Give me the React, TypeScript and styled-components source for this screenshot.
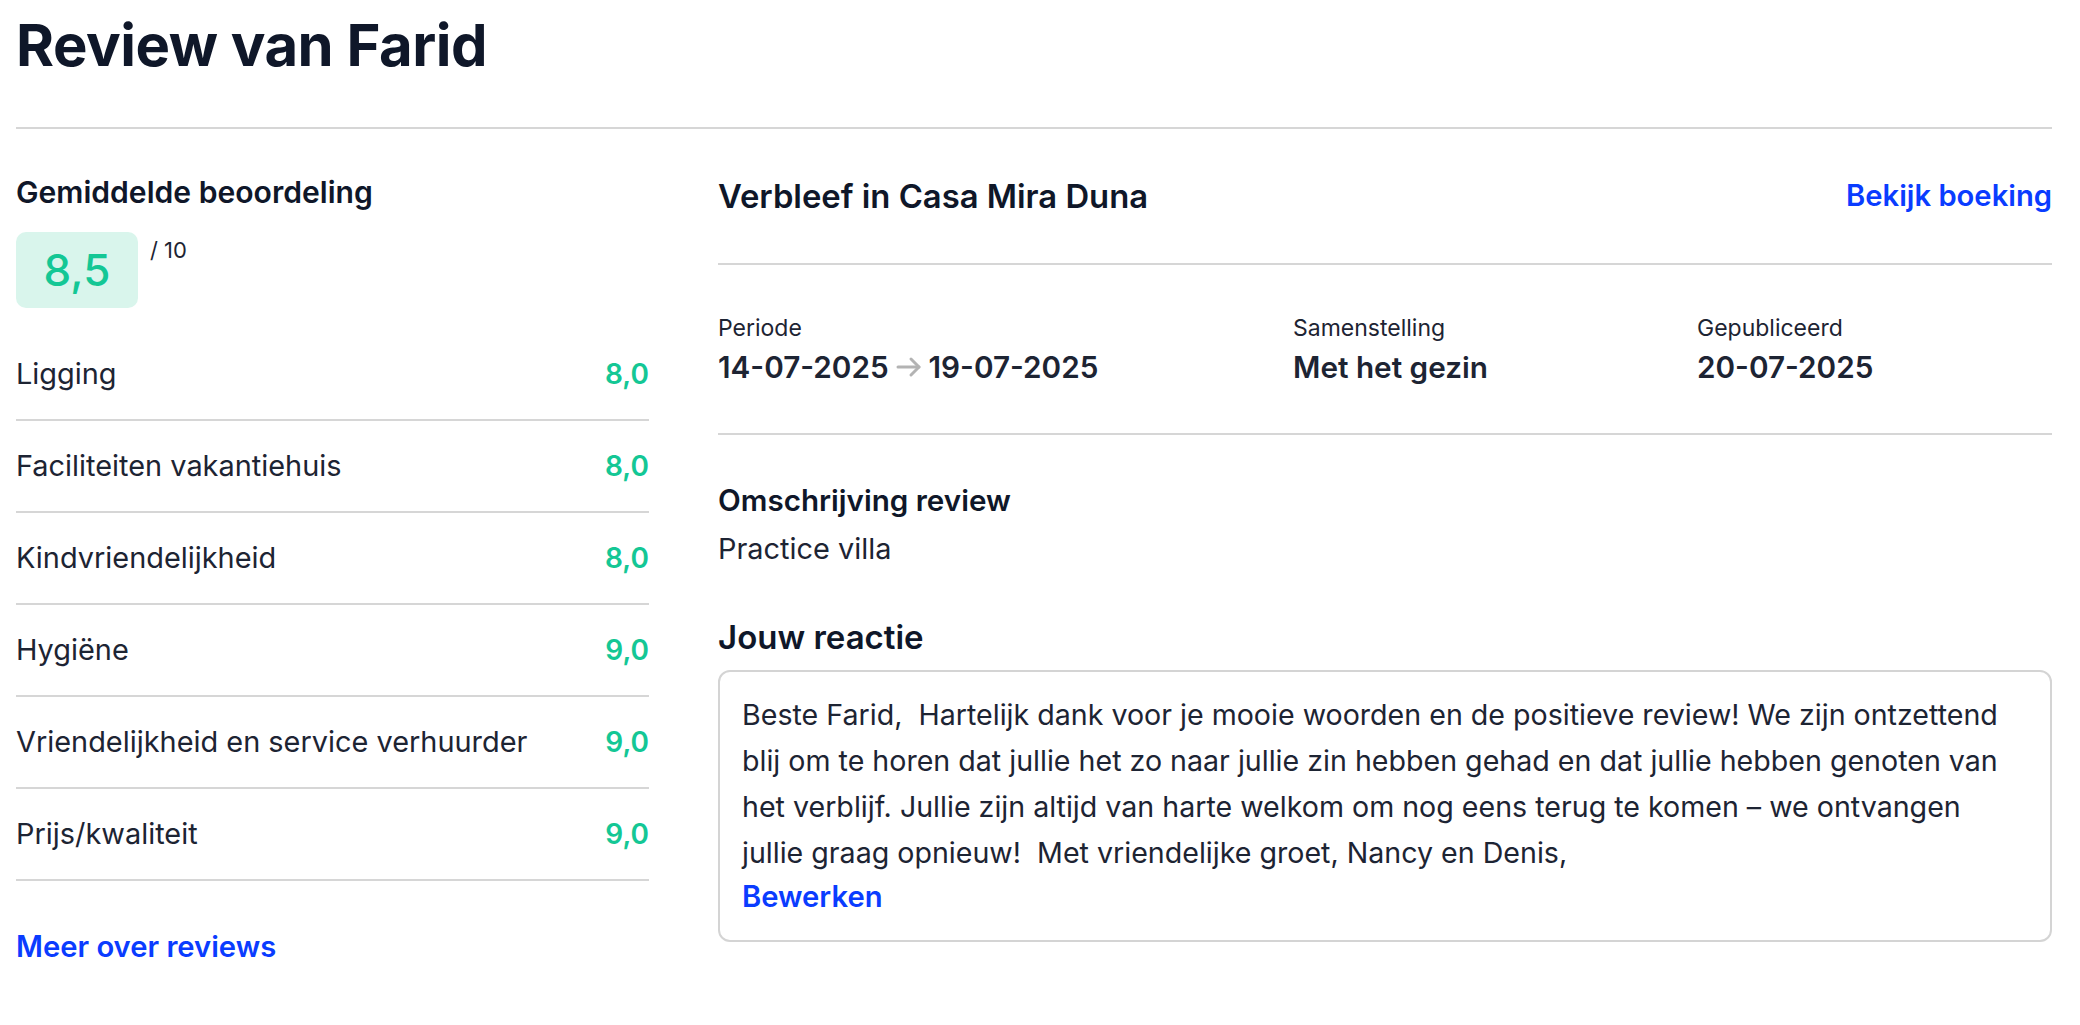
import React from "react";
import styled, { createGlobalStyle } from "styled-components";

const GlobalStyle = createGlobalStyle`
  html, body { margin: 0; padding: 0; background: #ffffff; }
  body { font-family: Inter, "Noto Sans", sans-serif; color: #0f172a; }
  * { box-sizing: border-box; }
`;

const Page = styled.div`
  padding: 11px 28px 40px 16px;
`;

const Title = styled.h1`
  margin: 0 0 46px;
  font-size: 58px;
  line-height: 1.2;
  font-weight: 700;
  letter-spacing: -0.5px;
  color: #0f1729;
`;

const Divider = styled.hr`
  margin: 0;
  border: 0;
  border-top: 2px solid #d6d6d6;
`;

const Columns = styled.div`
  display: grid;
  grid-template-columns: 633px 1fr;
  column-gap: 69px;
`;

const LeftCol = styled.section`
  padding-top: 45px;
  display: flex;
  flex-direction: column;
`;

const SectionHeading = styled.h3<{ $size?: number }>`
  margin: 0;
  font-size: ${(p) => p.$size ?? 29.6}px;
  line-height: 36px;
  font-weight: 600;
  color: #0f1729;
`;

const ScoreRow = styled.div`
  display: flex;
  align-items: flex-start;
  gap: 12px;
  margin-top: 22px;
`;

const ScoreBadge = styled.div`
  width: 122px;
  height: 76px;
  border-radius: 10px;
  background: #d9f5ec;
  color: #14c795;
  font-size: 44px;
  font-weight: 500;
  display: flex;
  align-items: center;
  justify-content: center;
`;

const ScoreMax = styled.span`
  font-size: 22px;
  line-height: 1;
  margin-top: 7px;
  color: #1d2433;
`;

const RatingList = styled.ul`
  list-style: none;
  margin: 21px 0 0;
  padding: 0;
`;

const RatingRow = styled.li`
  height: 92px;
  display: flex;
  align-items: center;
  justify-content: space-between;
  border-bottom: 2px solid #d6d6d6;
  font-size: 28.9px;
  color: #1d2433;
`;

const RatingValue = styled.span`
  font-weight: 600;
  font-size: 28px;
  color: #14c795;
`;

const Link = styled.a`
  font-size: 29.2px;
  font-weight: 600;
  color: #0a3cff;
  text-decoration: none;
  cursor: pointer;
`;

const MoreLink = styled(Link)`
  margin-top: 48px;
  line-height: 36px;
`;

const RightCol = styled.section`
  display: flex;
  flex-direction: column;
`;

const StayHeader = styled.div`
  height: 136px;
  display: flex;
  align-items: center;
  justify-content: space-between;
  border-bottom: 2px solid #d6d6d6;
`;

const StayTitle = styled.h2`
  margin: 0;
  font-size: 32.8px;
  font-weight: 600;
  color: #0f1729;
`;

const InfoGrid = styled.div`
  display: grid;
  grid-template-columns: 575px 404px 1fr;
  padding: 48px 0 48px;
  border-bottom: 2px solid #d6d6d6;
`;

const InfoItem = styled.div`
  display: flex;
  flex-direction: column;
  gap: 6px;
`;

const InfoLabel = styled.span`
  font-size: 23px;
  line-height: 30px;
  color: #1d2433;
`;

const InfoValue = styled.span`
  display: flex;
  align-items: center;
  gap: 6px;
  font-size: 29.7px;
  line-height: 36px;
  font-weight: 600;
  color: #1d2433;
`;

const Description = styled.div`
  margin-top: 47px;
  display: flex;
  flex-direction: column;
  gap: 13px;
`;

const BodyText = styled.p`
  margin: 0;
  font-size: 28.9px;
  line-height: 36px;
  color: #1d2433;
`;

const ReplyHeading = styled.h3`
  margin: 50px 0 0;
  font-size: 33px;
  line-height: 40px;
  font-weight: 600;
  color: #0f1729;
`;

const ReplyBox = styled.div`
  margin-top: 13px;
  border: 2px solid #d4d4d4;
  border-radius: 12px;
  padding: 20px 20px 22px 22px;
`;

const ReplyText = styled.p`
  margin: 0;
  font-size: 28.6px;
  line-height: 46px;
  color: #1d2433;
  white-space: pre-wrap;
`;

const EditLink = styled(Link)`
  display: block;
  line-height: 42px;
`;

const Arrow = () => (
  <svg width="28" height="30" viewBox="0 0 28 30" fill="none" stroke="#b3b3b3" strokeWidth="3" strokeLinecap="round" strokeLinejoin="round">
    <path d="M3 15h21" />
    <path d="M16 7l8 8-8 8" />
  </svg>
);

const ratings: [string, string][] = [
  ["Ligging", "8,0"],
  ["Faciliteiten vakantiehuis", "8,0"],
  ["Kindvriendelijkheid", "8,0"],
  ["Hygiëne", "9,0"],
  ["Vriendelijkheid en service verhuurder", "9,0"],
  ["Prijs/kwaliteit", "9,0"],
];

export default function App() {
  return (
    <Page>
      <GlobalStyle />
      <Title>Review van Farid</Title>
      <Divider />
      <Columns>
        <LeftCol>
          <SectionHeading $size={30.1}>Gemiddelde beoordeling</SectionHeading>
          <ScoreRow>
            <ScoreBadge>8,5</ScoreBadge>
            <ScoreMax>/ 10</ScoreMax>
          </ScoreRow>
          <RatingList>
            {ratings.map(([label, value]) => (
              <RatingRow key={label}>
                <span>{label}</span>
                <RatingValue>{value}</RatingValue>
              </RatingRow>
            ))}
          </RatingList>
          <MoreLink>Meer over reviews</MoreLink>
        </LeftCol>
        <RightCol>
          <StayHeader>
            <StayTitle>Verbleef in Casa Mira Duna</StayTitle>
            <Link>Bekijk boeking</Link>
          </StayHeader>
          <InfoGrid>
            <InfoItem>
              <InfoLabel>Periode</InfoLabel>
              <InfoValue>
                14-07-2025
                <Arrow />
                19-07-2025
              </InfoValue>
            </InfoItem>
            <InfoItem>
              <InfoLabel>Samenstelling</InfoLabel>
              <InfoValue>Met het gezin</InfoValue>
            </InfoItem>
            <InfoItem>
              <InfoLabel>Gepubliceerd</InfoLabel>
              <InfoValue>20-07-2025</InfoValue>
            </InfoItem>
          </InfoGrid>
          <Description>
            <SectionHeading>Omschrijving review</SectionHeading>
            <BodyText>Practice villa</BodyText>
          </Description>
          <ReplyHeading>Jouw reactie</ReplyHeading>
          <ReplyBox>
            <ReplyText>
              {"Beste Farid,  Hartelijk dank voor je mooie woorden en de positieve review! We zijn ontzettend blij om te horen dat jullie het zo naar jullie zin hebben gehad en dat jullie hebben genoten van het verblijf. Jullie zijn altijd van harte welkom om nog eens terug te komen – we ontvangen jullie graag opnieuw!  Met vriendelijke groet, Nancy en Denis,"}
            </ReplyText>
            <EditLink>Bewerken</EditLink>
          </ReplyBox>
        </RightCol>
      </Columns>
    </Page>
  );
}
